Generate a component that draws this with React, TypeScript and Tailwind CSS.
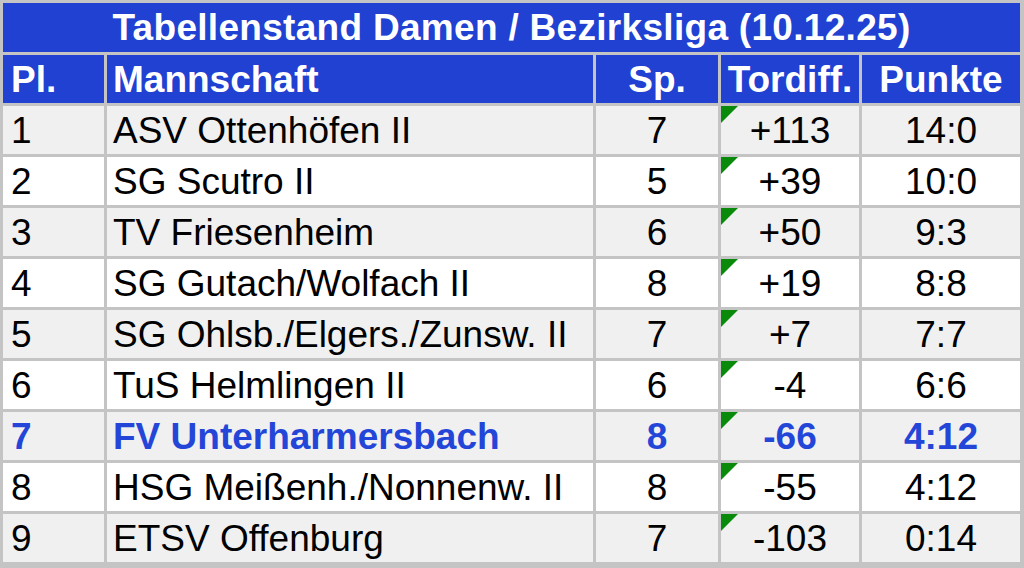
import React from 'react'

type Row = { pl: number; team: string; sp: number; diff: string; pts: string; own?: boolean }

const rows: Row[] = [
  { pl: 1, team: 'ASV Ottenhöfen II', sp: 7, diff: '+113', pts: '14:0' },
  { pl: 2, team: 'SG Scutro II', sp: 5, diff: '+39', pts: '10:0' },
  { pl: 3, team: 'TV Friesenheim', sp: 6, diff: '+50', pts: '9:3' },
  { pl: 4, team: 'SG Gutach/Wolfach II', sp: 8, diff: '+19', pts: '8:8' },
  { pl: 5, team: 'SG Ohlsb./Elgers./Zunsw. II', sp: 7, diff: '+7', pts: '7:7' },
  { pl: 6, team: 'TuS Helmlingen II', sp: 6, diff: '-4', pts: '6:6' },
  { pl: 7, team: 'FV Unterharmersbach', sp: 8, diff: '-66', pts: '4:12', own: true },
  { pl: 8, team: 'HSG Meißenh./Nonnenw. II', sp: 8, diff: '-55', pts: '4:12' },
  { pl: 9, team: 'ETSV Offenburg', sp: 7, diff: '-103', pts: '0:14' },
]

const Flag = () => (
  <svg className="absolute left-0 top-0" width="17" height="17" viewBox="0 0 17 17">
    <polygon points="0,0 17,0 0,17" fill="#0a8a0a" />
  </svg>
)

export default function App() {
  return (
    <div
      className="w-[1024px] h-[568px] bg-[#c4c4c4] pt-[3px] pl-[3px] pr-[4px] pb-[5px] overflow-hidden"
      style={{ fontFamily: '"Liberation Sans", Arial, sans-serif' }}
    >
      <div className="grid grid-cols-[101px_486px_122px_138px_158px] grid-rows-[49px_repeat(10,48px)] gap-[3px] text-[37px] leading-none">
        <div className="col-span-5 bg-[#2041d2] text-white font-bold tracking-[0.3px] flex items-center justify-center">
          Tabellenstand Damen / Bezirksliga (10.12.25)
        </div>

        <div className="bg-[#2041d2] text-white font-bold flex items-center pl-[8px]">Pl.</div>
        <div className="bg-[#2041d2] text-white font-bold flex items-center pl-[6px]">Mannschaft</div>
        <div className="bg-[#2041d2] text-white font-bold flex items-center justify-center">Sp.</div>
        <div className="bg-[#2041d2] text-white font-bold flex items-center justify-center">Tordiff.</div>
        <div className="bg-[#2041d2] text-white font-bold flex items-center justify-center">Punkte</div>

        {rows.map((r, i) => {
          const bg = i % 2 === 0 ? 'bg-[#f0f0f0]' : 'bg-white'
          const txt = r.own ? 'text-[#2446d8] font-bold' : 'text-black'
          return (
            <React.Fragment key={r.pl}>
              <div className={`${bg} ${txt} flex items-center pl-[8px]`}>{r.pl}</div>
              <div className={`${bg} ${txt} flex items-center pl-[6px] whitespace-nowrap`}>{r.team}</div>
              <div className={`${bg} ${txt} flex items-center justify-center`}>{r.sp}</div>
              <div className={`${bg} ${txt} relative flex items-center justify-center`}>
                <Flag />
                {r.diff}
              </div>
              <div className={`${bg} ${txt} flex items-center justify-center`}>{r.pts}</div>
            </React.Fragment>
          )
        })}
      </div>
    </div>
  )
}
